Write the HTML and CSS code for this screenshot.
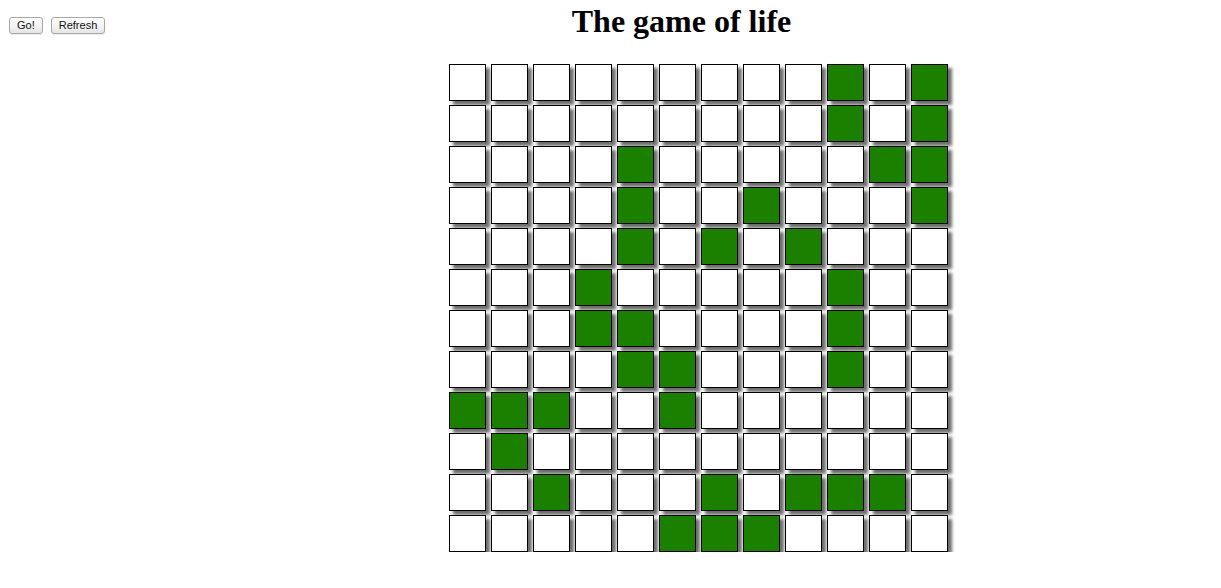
FILE: index.html
```html
<!DOCTYPE html>
<html>
<head>
<meta charset="utf-8">
<title>The game of life</title>
<link rel="stylesheet" href="styles.css">
</head>
<body>
<div class="page">
  <div class="controls">
    <button class="btn">Go!</button>
    <button class="btn">Refresh</button>
  </div>
  <div class="main">
    <h1 class="title">The game of life</h1>
    <div class="board">
      <div class="cell"></div><div class="cell"></div><div class="cell"></div><div class="cell"></div><div class="cell"></div><div class="cell"></div><div class="cell"></div><div class="cell"></div><div class="cell"></div><div class="cell live"></div><div class="cell"></div><div class="cell live"></div>
      <div class="cell"></div><div class="cell"></div><div class="cell"></div><div class="cell"></div><div class="cell"></div><div class="cell"></div><div class="cell"></div><div class="cell"></div><div class="cell"></div><div class="cell live"></div><div class="cell"></div><div class="cell live"></div>
      <div class="cell"></div><div class="cell"></div><div class="cell"></div><div class="cell"></div><div class="cell live"></div><div class="cell"></div><div class="cell"></div><div class="cell"></div><div class="cell"></div><div class="cell"></div><div class="cell live"></div><div class="cell live"></div>
      <div class="cell"></div><div class="cell"></div><div class="cell"></div><div class="cell"></div><div class="cell live"></div><div class="cell"></div><div class="cell"></div><div class="cell live"></div><div class="cell"></div><div class="cell"></div><div class="cell"></div><div class="cell live"></div>
      <div class="cell"></div><div class="cell"></div><div class="cell"></div><div class="cell"></div><div class="cell live"></div><div class="cell"></div><div class="cell live"></div><div class="cell"></div><div class="cell live"></div><div class="cell"></div><div class="cell"></div><div class="cell"></div>
      <div class="cell"></div><div class="cell"></div><div class="cell"></div><div class="cell live"></div><div class="cell"></div><div class="cell"></div><div class="cell"></div><div class="cell"></div><div class="cell"></div><div class="cell live"></div><div class="cell"></div><div class="cell"></div>
      <div class="cell"></div><div class="cell"></div><div class="cell"></div><div class="cell live"></div><div class="cell live"></div><div class="cell"></div><div class="cell"></div><div class="cell"></div><div class="cell"></div><div class="cell live"></div><div class="cell"></div><div class="cell"></div>
      <div class="cell"></div><div class="cell"></div><div class="cell"></div><div class="cell"></div><div class="cell live"></div><div class="cell live"></div><div class="cell"></div><div class="cell"></div><div class="cell"></div><div class="cell live"></div><div class="cell"></div><div class="cell"></div>
      <div class="cell live"></div><div class="cell live"></div><div class="cell live"></div><div class="cell"></div><div class="cell"></div><div class="cell live"></div><div class="cell"></div><div class="cell"></div><div class="cell"></div><div class="cell"></div><div class="cell"></div><div class="cell"></div>
      <div class="cell"></div><div class="cell live"></div><div class="cell"></div><div class="cell"></div><div class="cell"></div><div class="cell"></div><div class="cell"></div><div class="cell"></div><div class="cell"></div><div class="cell"></div><div class="cell"></div><div class="cell"></div>
      <div class="cell"></div><div class="cell"></div><div class="cell live"></div><div class="cell"></div><div class="cell"></div><div class="cell"></div><div class="cell live"></div><div class="cell"></div><div class="cell live"></div><div class="cell live"></div><div class="cell live"></div><div class="cell"></div>
      <div class="cell"></div><div class="cell"></div><div class="cell"></div><div class="cell"></div><div class="cell"></div><div class="cell live"></div><div class="cell live"></div><div class="cell live"></div><div class="cell"></div><div class="cell"></div><div class="cell"></div><div class="cell"></div>
    </div>
  </div>
</div>
</body>
</html>
```

FILE: styles.css
```css
html, body {
  margin: 0;
  padding: 0;
  background: #ffffff;
}

.page {
  display: flex;
  align-items: flex-start;
  padding: 0 8px;
}

.controls {
  width: 141px;
  flex: none;
  display: flex;
  gap: 8px;
  padding-top: 17px;
  padding-left: 1px;
}

.btn {
  height: 17px;
  padding: 0 7px;
  margin: 0;
  font-family: "Liberation Sans", Arial, sans-serif;
  font-size: 11px;
  line-height: 15px;
  color: #111;
  background: linear-gradient(#ffffff, #f2f2f2 60%, #e4e4e4);
  border: 1px solid #a8a8a8;
  border-radius: 3px;
  box-shadow: 0 1px 1px rgba(0,0,0,0.08);
}

.main {
  flex: 1;
}

.title {
  margin: 3px 0 24px;
  text-align: center;
  font-family: "Liberation Serif", "Times New Roman", serif;
  font-weight: bold;
  font-size: 32px;
  line-height: 37px;
  color: #000;
}

.board {
  margin-left: 299px;
  display: grid;
  grid-template-columns: repeat(12, 37px);
  grid-auto-rows: 37px;
  column-gap: 5px;
  row-gap: 4px;
}

.cell {
  box-sizing: border-box;
  border: 1px solid #000;
  background: #ffffff;
  box-shadow: 4px 4px 3px #6e6e6e;
}

.cell.live {
  background: #1b8000;
}
```
